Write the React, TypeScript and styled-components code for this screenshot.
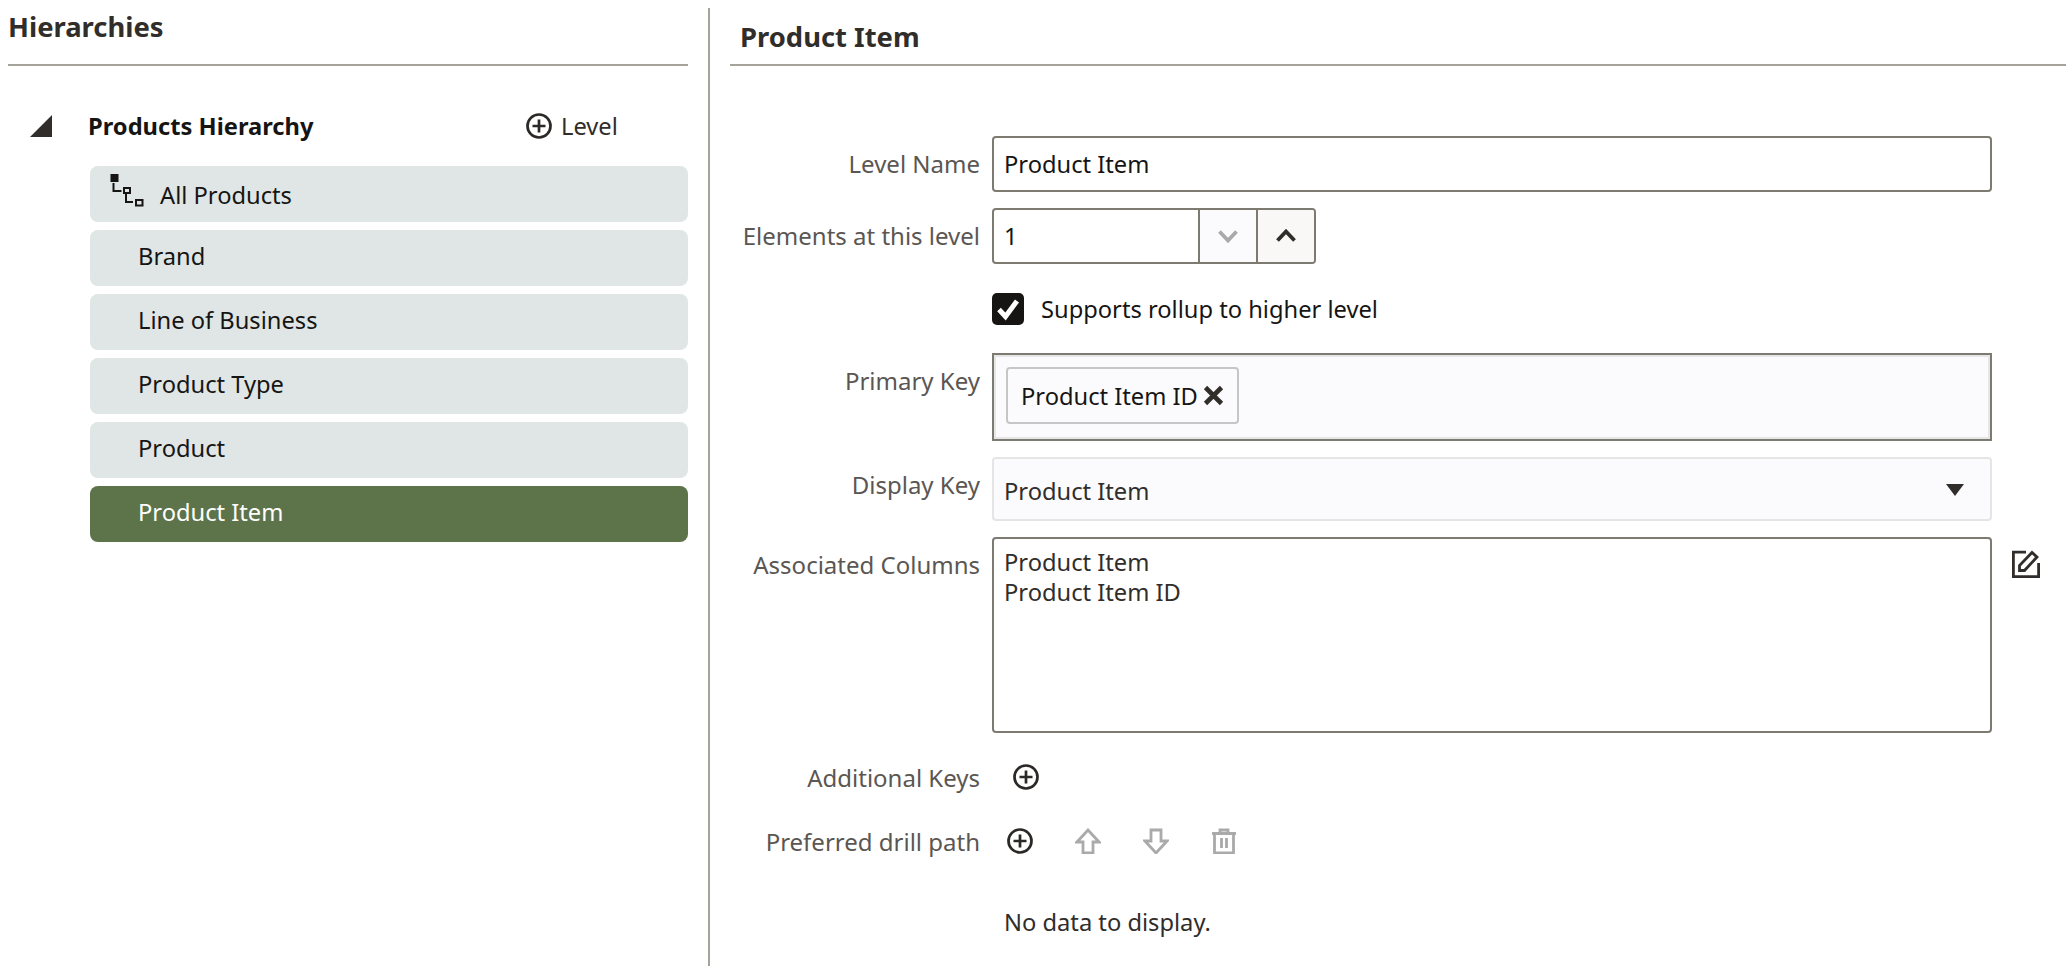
import styled, { createGlobalStyle } from "styled-components";

const GlobalStyle = createGlobalStyle`
    html, body {
        margin: 0;
        padding: 0;
        background: #ffffff;
        overflow: hidden;
    }
    body {
        font-family: "Noto Sans", "Open Sans", sans-serif;
        font-size: 23.7px;
        color: #161513;
    }
`;

const Page = styled.div`
    display: flex;
    width: 2066px;
    height: 966px;
    overflow: hidden;
`;

const LeftPanel = styled.section`
    width: 680px;
    margin-left: 8px;
    flex-shrink: 0;
`;

const Divider = styled.div`
    width: 2px;
    height: 958px;
    margin: 8px 20px 0 20px;
    background: #a5a39b;
    flex-shrink: 0;
`;

const RightPanel = styled.section`
    flex: 1;
`;

const Header = styled.header<{ $indent: number; $pad: number }>`
    box-sizing: border-box;
    height: 66px;
    padding-left: ${(p) => p.$indent}px;
    padding-top: ${(p) => p.$pad}px;
    border-bottom: 2px solid #a5a39b;
`;

const Title = styled.h2`
    margin: 0;
    font-size: 27.4px;
    line-height: 38px;
    font-weight: 700;
    color: #312d2a;
`;

const HierarchyHead = styled.div`
    display: flex;
    align-items: center;
    height: 40px;
    margin-top: 40px;
    padding-left: 22px;
`;

const Collapse = styled.svg`
    width: 22px;
    height: 22px;
    flex-shrink: 0;
`;

const HierarchyName = styled.span`
    margin-left: 36px;
    width: 438px;
    font-weight: 700;
    color: #161513;
`;

const AddLevel = styled.span`
    display: flex;
    align-items: center;
    gap: 9px;
    color: #312d2a;
`;

const LevelList = styled.ul`
    list-style: none;
    margin: 20px 0 0 82px;
    padding: 0;
    display: flex;
    flex-direction: column;
    gap: 8px;
`;

const LevelRow = styled.li<{ $selected?: boolean; $root?: boolean }>`
    display: flex;
    align-items: center;
    gap: 16px;
    height: 56px;
    box-sizing: border-box;
    padding-left: ${(p) => (p.$root ? 20 : 48)}px;
    padding-top: ${(p) => (p.$root ? 2 : 0)}px;
    padding-bottom: ${(p) => (p.$root ? 0 : 5)}px;
    border-radius: 8px;
    background: ${(p) => (p.$selected ? "#5d734a" : "#dfe6e5")};
    color: ${(p) => (p.$selected ? "#ffffff" : "#161513")};
`;

const TreeIcon = styled.svg`
    width: 34px;
    height: 34px;
    margin-bottom: 10px;
    flex-shrink: 0;
`;

const Form = styled.div`
    padding-top: 70px;
    display: flex;
    flex-direction: column;
`;

const FormRow = styled.div<{ $top?: number }>`
    display: flex;
    align-items: flex-start;
    margin-top: ${(p) => p.$top ?? 0}px;
`;

const Label = styled.label<{ $line?: number }>`
    width: 250px;
    margin-right: 12px;
    flex-shrink: 0;
    text-align: right;
    font-size: 24px;
    line-height: ${(p) => p.$line ?? 56}px;
    color: #5b5652;
    white-space: nowrap;
`;

const TextBox = styled.div`
    width: 1000px;
    height: 56px;
    box-sizing: border-box;
    display: flex;
    align-items: center;
    padding: 0 0 1px 10px;
    border: 2px solid #7d7a72;
    border-radius: 4px;
    background: #ffffff;
`;

const Spinner = styled.div`
    display: flex;
    width: 324px;
    height: 56px;
    box-sizing: border-box;
    border: 2px solid #7d7a72;
    border-radius: 4px;
    overflow: hidden;
`;

const SpinnerValue = styled.div`
    flex: 1;
    display: flex;
    align-items: center;
    padding-left: 10px;
`;

const SpinnerButton = styled.div<{ $tone: string }>`
    width: 58px;
    box-sizing: border-box;
    display: flex;
    align-items: center;
    justify-content: center;
    border-left: 2px solid #7d7a72;
    background: ${(p) => p.$tone};
`;

const CheckRow = styled.div`
    display: flex;
    align-items: center;
    gap: 17px;
    margin: 29px 0 0 262px;
`;

const CheckBox = styled.div`
    width: 32px;
    height: 32px;
    border-radius: 5px;
    background: #161513;
    display: flex;
    align-items: center;
    justify-content: center;
`;

const ChipBox = styled.div`
    width: 1000px;
    height: 88px;
    box-sizing: border-box;
    padding: 12px 12px;
    border: 2px solid #7d7a72;
    box-shadow: inset 0 0 0 2px #e6e6e6;
    background: #fbfbfd;
`;

const Chip = styled.div`
    display: inline-flex;
    align-items: center;
    gap: 5px;
    height: 57px;
    width: 233px;
    box-sizing: border-box;
    padding-left: 13px;
    border: 2px solid #c6c6c6;
    border-radius: 4px;
    background: #fbfbfd;
`;

const SelectBox = styled.div`
    width: 1000px;
    height: 64px;
    box-sizing: border-box;
    display: flex;
    align-items: center;
    justify-content: space-between;
    padding: 4px 26px 0 10px;
    border: 2px solid #e5e5e5;
    border-radius: 4px;
    background: #fbfbfd;
    color: #312d2a;
`;

const SelectArrow = styled.svg`
    width: 18px;
    height: 12px;
    margin-top: -3px;
`;

const TextArea = styled.div`
    width: 1000px;
    height: 196px;
    box-sizing: border-box;
    padding: 8px 10px;
    border: 2px solid #7d7a72;
    border-radius: 4px;
    line-height: 30px;
    color: #312d2a;
`;

const EditIcon = styled.svg`
    width: 28px;
    height: 28px;
    margin: 13px 0 0 20px;
`;

const IconBar = styled.div<{ $indent: number }>`
    display: flex;
    align-items: center;
    gap: 42px;
    height: 40px;
    padding-left: ${(p) => p.$indent}px;
`;

const Glyph = styled.svg<{ $size?: number }>`
    width: ${(p) => p.$size ?? 26}px;
    height: ${(p) => p.$size ?? 26}px;
    flex-shrink: 0;
`;

const EmptyNote = styled.p`
    margin: 43px 0 0 274px;
    line-height: 32px;
    color: #312d2a;
`;

const levels = ["Brand", "Line of Business", "Product Type", "Product"];

function PlusCircle() {
    return (
        <Glyph viewBox="0 0 26 26" fill="none" stroke="#2b2826" strokeWidth="2.7">
            <circle cx="13" cy="13" r="11.5" />
            <path d="M13 6.500v13M6.500 13h13" />
        </Glyph>
    );
}

export default function App() {
    return (
        <Page>
            <GlobalStyle />
            <LeftPanel>
                <Header $indent={0} $pad={8}>
                    <Title>Hierarchies</Title>
                </Header>
                <HierarchyHead>
                    <Collapse viewBox="0 0 22 22">
                        <path d="M22 0V22H0Z" fill="#312d2a" />
                    </Collapse>
                    <HierarchyName>Products Hierarchy</HierarchyName>
                    <AddLevel>
                        <PlusCircle />
                        Level
                    </AddLevel>
                </HierarchyHead>
                <LevelList>
                    <LevelRow $root>
                        <TreeIcon viewBox="0 0 34 34" fill="none" stroke="#161513" strokeWidth="2">
                            <rect x="0.5" y="1" width="8" height="8" fill="#161513" stroke="none" />
                            <path d="M3.500 10v8h8" />
                            <rect x="14" y="15" width="6" height="5" />
                            <path d="M16 21v8h7" />
                            <rect x="26" y="27" width="6.500" height="5.500" />
                        </TreeIcon>
                        All Products
                    </LevelRow>
                    {levels.map((level) => (
                        <LevelRow key={level}>{level}</LevelRow>
                    ))}
                    <LevelRow $selected>Product Item</LevelRow>
                </LevelList>
            </LeftPanel>
            <Divider />
            <RightPanel>
                <Header $indent={10} $pad={18}>
                    <Title>Product Item</Title>
                </Header>
                <Form>
                    <FormRow>
                        <Label>Level Name</Label>
                        <TextBox>Product Item</TextBox>
                    </FormRow>
                    <FormRow $top={16}>
                        <Label>Elements at this level</Label>
                        <Spinner>
                            <SpinnerValue>1</SpinnerValue>
                            <SpinnerButton $tone="#fbfbfd">
                                <Glyph $size={22} viewBox="0 0 22 22" fill="none" stroke="#a9a9a9" strokeWidth="3.800">
                                    <path d="M2.500 6.500 11 15.500l8.500-9" />
                                </Glyph>
                            </SpinnerButton>
                            <SpinnerButton $tone="#f9f8f6">
                                <Glyph $size={22} viewBox="0 0 22 22" fill="none" stroke="#312d2a" strokeWidth="3.800">
                                    <path d="M2.500 15.500 11 6.500l8.500 9" />
                                </Glyph>
                            </SpinnerButton>
                        </Spinner>
                    </FormRow>
                    <CheckRow>
                        <CheckBox>
                            <Glyph $size={24} viewBox="0 0 24 24" fill="none" stroke="#ffffff" strokeWidth="5">
                                <path d="M3 12.500 9.500 19.500 21 4" />
                            </Glyph>
                        </CheckBox>
                        Supports rollup to higher level
                    </CheckRow>
                    <FormRow $top={28}>
                        <Label>Primary Key</Label>
                        <ChipBox>
                            <Chip>
                                Product Item ID
                                <Glyph $size={21} viewBox="0 0 21 21" fill="none" stroke="#312d2a" strokeWidth="4.600">
                                    <path d="M2.500 2.500l16 16M18.500 2.500l-16 16" />
                                </Glyph>
                            </Chip>
                        </ChipBox>
                    </FormRow>
                    <FormRow $top={16}>
                        <Label>Display Key</Label>
                        <SelectBox>
                            Product Item
                            <SelectArrow viewBox="0 0 18 12">
                                <path d="M0 0H18L9 12Z" fill="#312d2a" />
                            </SelectArrow>
                        </SelectBox>
                    </FormRow>
                    <FormRow $top={16}>
                        <Label>Associated Columns</Label>
                        <TextArea>
                            Product Item
                            <br />
                            Product Item ID
                        </TextArea>
                        <EditIcon viewBox="0 0 28 28" fill="none" stroke="#312d2a" strokeWidth="2.800">
                            <path d="M14 2.200H1.400V26.600H26.600V13" />
                            <path d="M7.500 20.500V15.500L20 2.500 25 7 12.500 20.500Z" />
                        </EditIcon>
                    </FormRow>
                    <FormRow $top={24}>
                        <Label $line={42}>Additional Keys</Label>
                        <IconBar $indent={21}>
                            <PlusCircle />
                        </IconBar>
                    </FormRow>
                    <FormRow $top={22}>
                        <Label $line={42}>Preferred drill path</Label>
                        <IconBar $indent={15}>
                            <PlusCircle />
                            <Glyph viewBox="0 0 26 26" fill="none" stroke="#aaaaaa" strokeWidth="2.800">
                                <path d="M13 2 24 14H18V25H8V14H2Z" />
                            </Glyph>
                            <Glyph viewBox="0 0 26 26" fill="none" stroke="#aaaaaa" strokeWidth="2.800">
                                <path d="M13 25 24 13H18V2H8V13H2Z" />
                            </Glyph>
                            <Glyph viewBox="0 0 26 26" fill="none" stroke="#aaaaaa" strokeWidth="2.800">
                                <path d="M1 5.500H25M9 5.500V2H17V5.500M3.500 5.500V25H22.500V5.500M10.500 10V20M15.500 10V20" />
                            </Glyph>
                        </IconBar>
                    </FormRow>
                    <EmptyNote>No data to display.</EmptyNote>
                </Form>
            </RightPanel>
        </Page>
    );
}
